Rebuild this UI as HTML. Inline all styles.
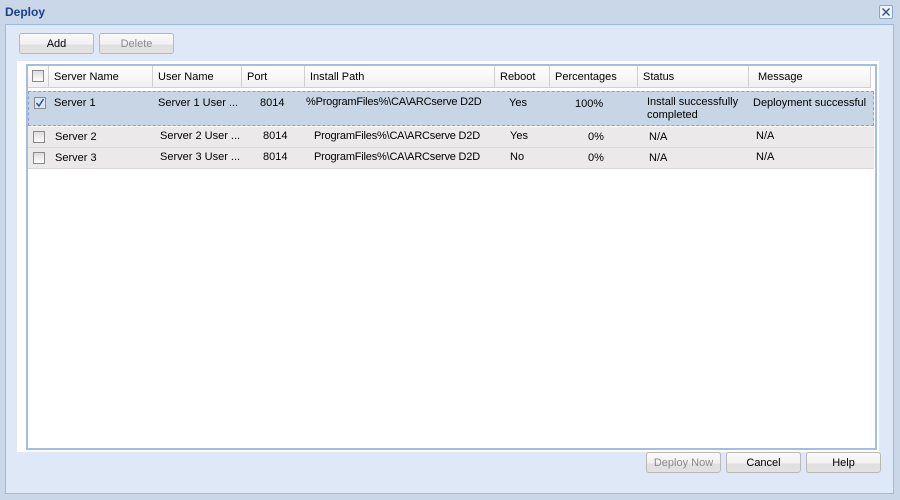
<!DOCTYPE html>
<html><head><style>
*{box-sizing:border-box;margin:0;padding:0}
body{width:900px;height:500px;background:#c9d7e8;font-family:"Liberation Sans",sans-serif;font-size:11px;color:#000;position:relative;overflow:hidden}
.abs{position:absolute}
.title{left:5px;top:5px;font-weight:bold;font-size:12px;color:#15428b}
.close{left:879px;top:5px;width:14px;height:14px;border:1px solid #8aa5c9;background:#eef3fa;border-radius:2px}
.panel{left:5px;top:24px;width:889px;height:470px;background:#dfe8f6;border:1px solid #99bbe8}
.btn{height:21px;border:1px solid #b8b8b8;border-radius:3px;background:linear-gradient(#fbfbfb 0%,#f0f0f0 55%,#e0e0e0 56%,#e2e2e2 100%);text-align:center;line-height:21px;font-size:11px}
.dis{color:#8a8a8a}
.white{left:17px;top:61px;width:862px;height:391px;background:#fff}
.grid{left:26px;top:64px;width:851px;height:386px;border:2px solid #a3bde3;background:#fff}
.hd{top:66px;height:22px;background:linear-gradient(#fff,#f0f0f0);border-right:1px solid #d0d0d0;border-bottom:1px solid #d0d0d0;line-height:23px;padding-left:5px}
.cb{width:12px;height:12px;border:1px solid #8a8a8a;background:linear-gradient(#ddd,#fff)}
.row{left:28px;width:846px;background:#ebe9e9;border-bottom:1px solid #d8d8d8}
.c{position:absolute}
</style></head><body>
<div class="abs title">Deploy</div>
<div class="abs close"><svg width="12" height="12" viewBox="0 0 12 12"><path d="M2.5 2.5L9.5 9.5M9.5 2.5L2.5 9.5" stroke="#2b4f86" stroke-width="1.4"/></svg></div>
<div class="abs panel"></div>
<div class="abs btn" style="left:19px;top:33px;width:75px">Add</div>
<div class="abs btn dis" style="left:99px;top:33px;width:75px">Delete</div>
<div class="abs white"></div>
<div class="abs grid"></div>
<div class="abs hd" style="left:28px;width:21px;padding:0"><div class="cb" style="margin:4px 0 0 4px"></div></div>
<div class="abs hd" style="left:49px;width:104px">Server Name</div>
<div class="abs hd" style="left:153px;width:89px">User Name</div>
<div class="abs hd" style="left:242px;width:63px">Port</div>
<div class="abs hd" style="left:305px;width:190px">Install Path</div>
<div class="abs hd" style="left:495px;width:55px">Reboot</div>
<div class="abs hd" style="left:550px;width:88px">Percentages</div>
<div class="abs hd" style="left:638px;width:111px">Status</div>
<div class="abs hd" style="left:749px;width:122px;padding-left:9px">Message</div>
<div class="abs row" style="top:91px;height:35px;background:#c8d5e4;border:1px dashed #8a9fcf">
 <div class="c cb" style="left:5px;top:5px;background:#dde6f0"><svg width="10" height="10" viewBox="0 0 10 10" style="position:absolute;left:0;top:0"><path d="M1.5 5L4 8L8.5 1" stroke="#3050a0" stroke-width="1.5" fill="none"/></svg></div>
 <div class="c" style="left:25px;top:5px">Server 1</div>
 <div class="c" style="left:129px;top:5px">Server 1 User ...</div>
 <div class="c" style="left:231px;top:5px">8014</div>
 <div class="c" style="left:277px;top:4px;letter-spacing:-0.2px">%ProgramFiles%\CA\ARCserve D2D</div>
 <div class="c" style="left:480px;top:5px">Yes</div>
 <div class="c" style="left:546px;top:6px">100%</div>
 <div class="c" style="left:618px;top:4px;line-height:13px">Install successfully<br>completed</div>
 <div class="c" style="left:724px;top:5px">Deployment successful</div>
</div>
<div class="abs row" style="top:127px;height:21px">
 <div class="c cb" style="left:5px;top:4px"></div>
 <div class="c" style="left:27px;top:4px">Server 2</div>
 <div class="c" style="left:132px;top:3px">Server 2 User ...</div>
 <div class="c" style="left:235px;top:3px">8014</div>
 <div class="c" style="left:286px;top:3px;letter-spacing:-0.2px">ProgramFiles%\CA\ARCserve D2D</div>
 <div class="c" style="left:482px;top:3px">Yes</div>
 <div class="c" style="left:560px;top:4px">0%</div>
 <div class="c" style="left:621px;top:4px">N/A</div>
 <div class="c" style="left:728px;top:3px">N/A</div>
</div>
<div class="abs row" style="top:148px;height:21px">
 <div class="c cb" style="left:5px;top:4px"></div>
 <div class="c" style="left:27px;top:4px">Server 3</div>
 <div class="c" style="left:132px;top:3px">Server 3 User ...</div>
 <div class="c" style="left:235px;top:3px">8014</div>
 <div class="c" style="left:286px;top:3px;letter-spacing:-0.2px">ProgramFiles%\CA\ARCserve D2D</div>
 <div class="c" style="left:482px;top:3px">No</div>
 <div class="c" style="left:560px;top:4px">0%</div>
 <div class="c" style="left:621px;top:4px">N/A</div>
 <div class="c" style="left:728px;top:3px">N/A</div>
</div>
<div class="abs btn dis" style="left:646px;top:452px;width:75px">Deploy Now</div>
<div class="abs btn" style="left:726px;top:452px;width:75px">Cancel</div>
<div class="abs btn" style="left:806px;top:452px;width:75px">Help</div>
</body></html>
